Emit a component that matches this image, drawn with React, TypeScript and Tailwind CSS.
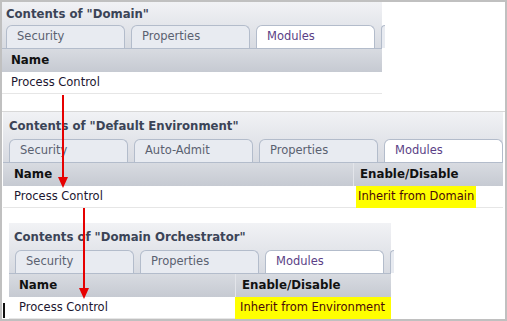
import React from "react";

type PanelProps = {
  title: string;
  tabs: string[];
  active: number;
  extraTab?: boolean;
  col2?: string;
  col2Left?: number;
  value?: string;
  valueClass?: string;
  className: string;
  titleH: string;
  titlePad: string;
  tabPad: string;
  cellPad: string;
};

function Panel({ title, tabs, active, extraTab, col2, col2Left, value, valueClass, className, titleH, titlePad, tabPad, cellPad }: PanelProps) {
  return (
    <div className={className}>
      <div className="bg-gradient-to-b from-[#f1f2f5] to-[#d7dae1]">
        <div
          className={`${titleH} flex items-center ${titlePad} text-[13px] font-bold text-[#3b4457]`}
          style={{ fontFamily: '"DejaVu Sans Condensed", "DejaVu Sans", Verdana, sans-serif' }}
        >
          {title}
        </div>
        <div className={`flex items-end gap-[6px] h-[24px] border-b border-[#b3bccb] ${tabPad}`}>
          {tabs.map((t, i) => (
            <div
              key={t}
              className={`w-[119px] h-[23px] shrink-0 rounded-t-[6px] border border-b-0 border-[#b3bccb] flex items-center pl-[10px] text-[11.5px] ${
                i === active ? "bg-white text-[#5b3f86]" : "bg-[#e8ebf1] text-[#5a6170]"
              }`}
            >
              {t}
            </div>
          ))}
          {extraTab && <div className="w-[4px] h-[23px] shrink-0 border-l border-t border-[#b3bccb] rounded-tl-[4px] bg-[#e8ebf1]" />}
        </div>
      </div>
      <div className="flex h-[23px] bg-gradient-to-b from-[#d8dbe1] to-[#c6cad2] text-[11.8px] font-bold text-[#111]">
        <div className={`flex items-center ${cellPad}`} style={col2Left ? { width: col2Left } : { flex: 1 }}>
          Name
        </div>
        {col2 && <div className="flex-1 flex items-center pl-[6px] border-l border-[#e3e5ea]">{col2}</div>}
      </div>
      <div className="flex h-[22px] bg-white border-b border-[#e6e6e6] text-[11.5px] text-[#1c1630]">
        <div className={`flex items-center ${cellPad}`} style={col2Left ? { width: col2Left } : { flex: 1 }}>
          Process Control
        </div>
        {value && (
          <div className="flex-1 flex items-center">
            <span className={`bg-[#ffff00] text-[#4a0a0a] h-[22px] flex items-center ${valueClass ?? ""}`}>{value}</span>
          </div>
        )}
      </div>
    </div>
  );
}

export default function App() {
  return (
    <div
      className="relative w-[507px] h-[321px] overflow-hidden bg-white border-2 border-[#c0c0c0]"
      style={{ fontFamily: '"DejaVu Sans", Verdana, sans-serif' }}
    >
      <Panel
        className="w-[380px]"
        title={'Contents of "Domain"'}
        tabs={["Security", "Properties", "Modules"]}
        active={2}
        extraTab
        titleH="h-[23px]"
        titlePad="pl-[4px]"
        tabPad="pl-[4px]"
        cellPad="pl-[9px]"
      />
      <div className="h-[18px] border-b border-[#d8d8d8]" />
      <Panel
        className="ml-[1px] w-[500px]"
        title={'Contents of "Default Environment"'}
        tabs={["Security", "Auto-Admit", "Properties", "Modules"]}
        active={3}
        col2="Enable/Disable"
        col2Left={350}
        value="Inherit from Domain"
        valueClass="ml-[3px] px-[2px]"
        titleH="h-[27px]"
        titlePad="pl-[6px]"
        tabPad="pl-[6px]"
        cellPad="pl-[11px]"
      />
      <div className="h-[15px]" />
      <Panel
        className="ml-[7px] w-[382px]"
        title={'Contents of "Domain Orchestrator"'}
        tabs={["Security", "Properties", "Modules"]}
        active={2}
        extraTab
        col2="Enable/Disable"
        col2Left={226}
        value="Inherit from Environment"
        valueClass="flex-1 pl-[5px]"
        titleH="h-[27px]"
        titlePad="pl-[5px]"
        tabPad="pl-[6px]"
        cellPad="pl-[10px]"
      />
      <div className="absolute left-[1px] top-[301px] w-[2px] h-[15px] bg-[#111]" />
      <svg className="absolute left-0 top-0" width="507" height="321" viewBox="2 2 507 321">
        <line x1="63" y1="95" x2="63" y2="180" stroke="#e60000" strokeWidth="2" />
        <polygon points="58,177 68,177 63,188" fill="#e60000" />
        <line x1="84" y1="208" x2="84" y2="291" stroke="#e60000" strokeWidth="2" />
        <polygon points="79,288 89,288 84,299" fill="#e60000" />
      </svg>
    </div>
  );
}
